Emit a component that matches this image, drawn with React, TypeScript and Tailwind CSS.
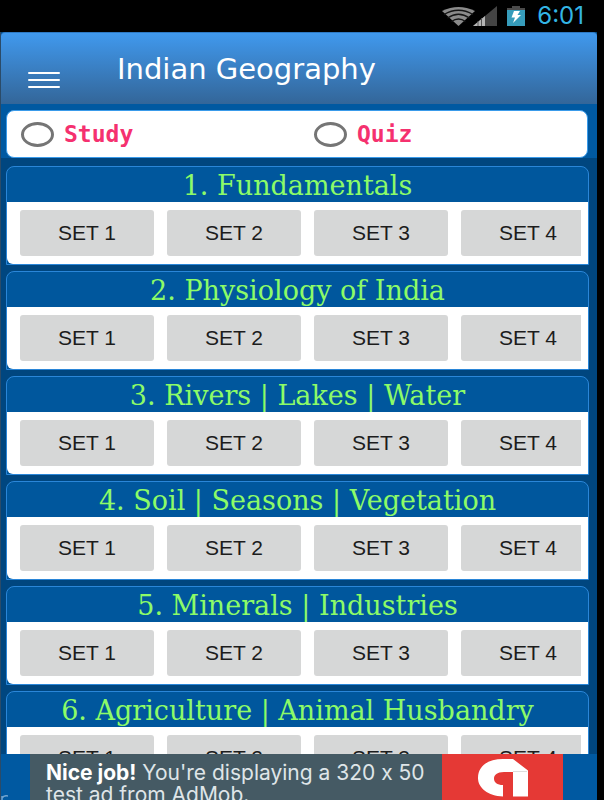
import { useState } from 'react'

const TOPICS = [
  '1. Fundamentals',
  '2. Physiology of India',
  '3. Rivers | Lakes | Water',
  '4. Soil | Seasons | Vegetation',
  '5. Minerals | Industries',
  '6. Agriculture | Animal Husbandry',
]

const SETS = ['SET 1', 'SET 2', 'SET 3', 'SET 4']

// ─── System status bar ──────────────────────────────────────────────
function StatusBar() {
  return (
    <div className="flex h-8 shrink-0 items-center justify-end bg-black pr-5">
      <svg className="h-[20px] w-[33px]" viewBox="0 0 33 20" fill="none">
        <path d="M0 5Q16.500 -3 33 5L16.500 20Z" fill="#8b8b8b" />
        <path
          d="M2 8.500Q16.500 0 31 8.500M5.500 12Q16.500 4.500 27.500 12M9.500 15.500Q16.500 10.500 23.500 15.500"
          stroke="#151515"
          strokeWidth="1.300"
        />
      </svg>
      <svg className="-ml-0.5 h-[20px] w-6" viewBox="0 0 24 20">
        <path d="M24 0V20H0Z" fill="#444" />
        <path d="M12 10V20H0Z" fill="#b5b5b5" />
        <path d="M5 15V20M8.500 12V20" stroke="#555" />
      </svg>
      <svg className="ml-2.5 h-5 w-[18px]" viewBox="0 0 18 20">
        <path d="M5 0H13V2H18V5H0V2H5Z" fill="#4b4b4b" />
        <path d="M0 4H18V20H0Z" fill="#369cbb" />
        <path d="M7 5H13L10.500 9H14L6 17L8 11.500H4.500Z" fill="#fff" />
      </svg>
      <time className="ml-3 font-['Inter',sans-serif] text-[24px] leading-8 text-[#33b5e5]">6:01</time>
    </div>
  )
}

function Header() {
  return (
    <header className="flex h-[72px] shrink-0 items-start rounded-t-sm border-t border-[#2d79c4] bg-linear-to-b from-[#4099ee] to-[#336699]">
      <button type="button" aria-label="Open menu" className="mt-[39px] ml-[27px] flex w-8 flex-col gap-[5px]">
        <span className="h-0.5 w-full rounded-full bg-white" />
        <span className="h-0.5 w-full rounded-full bg-white" />
        <span className="h-0.5 w-full rounded-full bg-white" />
      </button>
      <h1 className="ml-[57px] font-['DejaVu_Sans',sans-serif] text-[29px] leading-[72px] whitespace-nowrap text-white">
        Indian Geography
      </h1>
    </header>
  )
}

// ─── Study / Quiz switch ────────────────────────────────────────────
function ModePicker() {
  const [mode, setMode] = useState('')

  return (
    <div className="shrink-0 bg-[#0059a1] pt-1.5 pr-[9px] pl-[5px]">
      <div className="grid h-12 grid-cols-2 gap-1.5 rounded-lg border border-[#3a9bea] bg-white">
        {['Study', 'Quiz'].map((name) => (
          <label
            key={name}
            className="flex items-center gap-2.5 pl-3.5 font-['DejaVu_Sans_Mono',monospace] text-[23px] font-bold text-[#f5316f]"
          >
            <input
              type="radio"
              name="mode"
              value={name}
              checked={mode === name}
              onChange={() => setMode(name)}
              className="h-[25px] w-[33px] appearance-none rounded-[50%] border-[3px] border-[#757575] checked:bg-[#f5316f]"
            />
            {name}
          </label>
        ))}
      </div>
    </div>
  )
}

function TopicCard({ title }: { title: string }) {
  return (
    <section className="shrink-0 rounded-t-lg border border-[#2a86d8] bg-[#00579d]">
      <h2 className="h-[35px] text-center font-['DejaVu_Serif',serif] text-[27px] leading-[38px] whitespace-nowrap text-[#8cfb68]">
        {title}
      </h2>
      <div className="rounded-bl-md bg-white py-[8px] pr-[7px] pl-[13px]">
        <div className="flex gap-[13px] overflow-hidden">
          {SETS.map((set) => (
            <button
              key={set}
              type="button"
              className="h-[46px] w-[134px] shrink-0 rounded-[3px] bg-[#d6d7d7] font-['Liberation_Sans',sans-serif] text-[21px] text-[#1c1c1c]"
            >
              {set}
            </button>
          ))}
        </div>
      </div>
    </section>
  )
}

// ─── Bottom banner ──────────────────────────────────────────────────
function AdBanner() {
  return (
    <div className="flex h-[46px] shrink-0 justify-between overflow-hidden bg-[#0059a1] pr-[34px]">
      <svg className="mt-[41px] h-[5px] w-[7px] shrink-0" viewBox="0 0 7 5" fill="none">
        <path d="M1 5V1M1 3Q3 0 7 1" stroke="#6fa3cf" strokeWidth="1.500" />
      </svg>
      <div className="ml-[22px] flex min-w-0 flex-1">
        <p className="min-w-0 flex-1 bg-[#455a64] pt-2 pl-4 font-['Inter',sans-serif] text-[21px] leading-[22px] whitespace-nowrap text-[#dfe5e8] [font-variant-ligatures:none]">
          <strong className="font-bold text-white">Nice job!</strong> You're displaying a 320 x 50
          <br />
          test ad from AdMob.
        </p>
        <div className="w-[121px] shrink-0 bg-[#e53935] pt-1 pl-9">
          <svg className="h-[42px] w-[50px]" viewBox="0 0 50 42">
            <path
              d="M25 38.500C10 38 0 30 0 20C0 8 10 1 25 1H35L50 12.500V38.500H35V14H26C19 14 16 17 16 20.500C16 24.500 19 27 25 27Z"
              fill="#fff"
            />
            <path d="M35 13.500H49" stroke="#ddd" />
          </svg>
        </div>
      </div>
    </div>
  )
}

export default function App() {
  return (
    <div className="flex h-screen flex-col overflow-hidden bg-black">
      <StatusBar />
      <div className="mr-[7px] flex min-h-0 flex-1 flex-col border-l border-[#2b4b68] bg-[#00467f]">
        <Header />
        <ModePicker />
        <main className="flex min-h-0 flex-1 flex-col gap-1.5 overflow-hidden pt-2 pr-2 pl-[5px]">
          {TOPICS.map((title) => (
            <TopicCard key={title} title={title} />
          ))}
        </main>
        <AdBanner />
      </div>
    </div>
  )
}
